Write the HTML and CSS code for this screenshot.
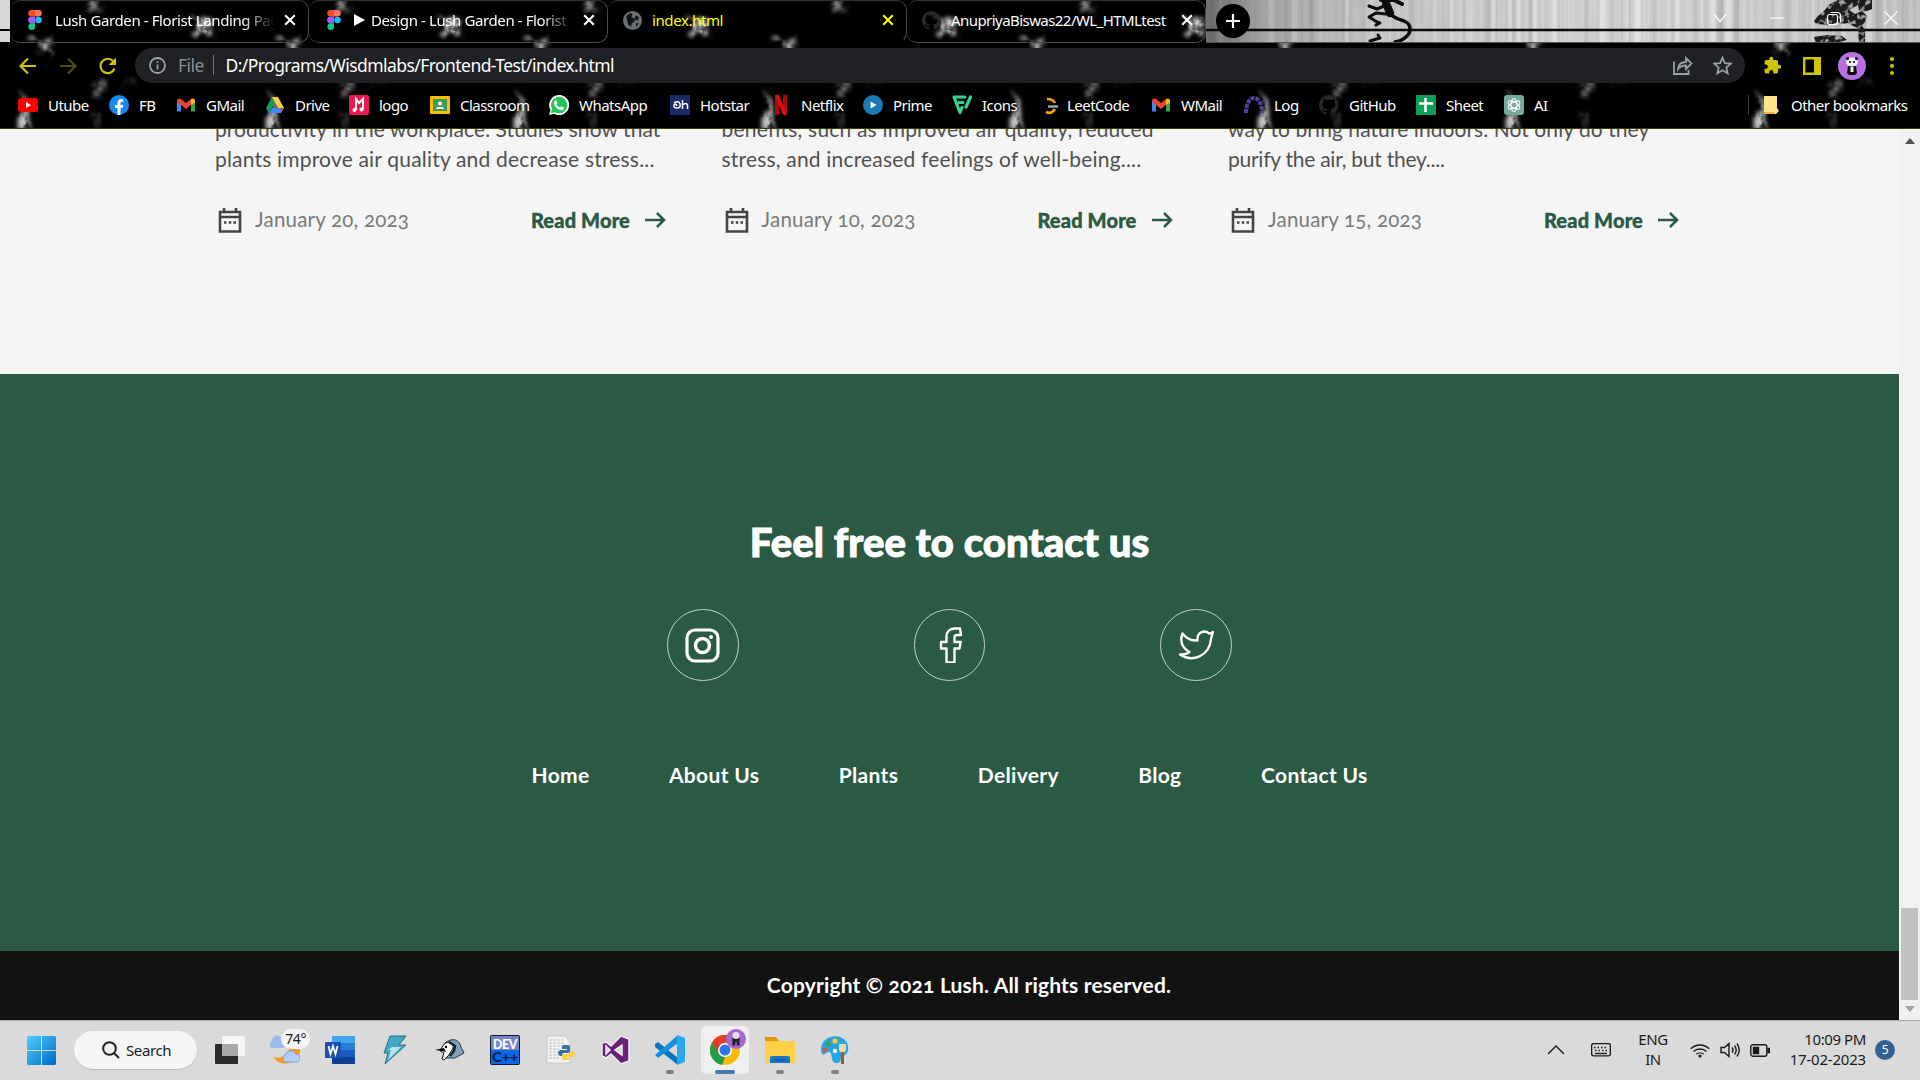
FILE: index.html
```html
<!DOCTYPE html>
<html lang="en">
<head>
<meta charset="utf-8">
<title>index.html</title>
<link rel="stylesheet" href="styles.css">
</head>
<body>
<div class="screen">
<header class="browser">
  <svg class="backdrop" width="1920" height="129" aria-hidden="true">
    <defs>
      <filter id="smoke" x="-80%" y="-80%" width="260%" height="260%">
        <feTurbulence type="fractalNoise" baseFrequency="0.08" numOctaves="5" seed="4" result="n"/>
        <feDisplacementMap in="SourceGraphic" in2="n" scale="22" xChannelSelector="R" yChannelSelector="G" result="d"/>
        <feGaussianBlur in="d" stdDeviation="2" result="b"/>
        <feColorMatrix in="n" type="matrix" values="0 0 0 0 1  0 0 0 0 1  0 0 0 0 1  3 0 0 0 -.75" result="m"/>
        <feComposite in="b" in2="m" operator="in"/>
      </filter>
      <pattern id="marble" width="248" height="129" patternUnits="userSpaceOnUse">
        <rect width="248" height="129" fill="#000"/>
        <g filter="url(#smoke)" fill="#d8d8d8">
          <path d="M190 19l14 0 9 6 0 12-8-2-9-6z"/>
          <path d="M28 40l24-3 8 4-12 5 2 12-6-2-6-9z"/>
          <path d="M88 80l22-2-4 12-8 6z" opacity=".5"/>
          <path d="M22 90l9 8 0 32h-9z" opacity=".9"/>
          <path d="M92 108l8 6-2 12-4-4z" opacity=".5"/>
          <path d="M88 2l14 2-2 8-8-3z" opacity=".6"/>
          <path d="M122 82l14-2-2 6z" opacity=".25"/>
        </g>
      </pattern>
      <linearGradient id="steel" x1="0" x2="1" y1="0" y2="0">
        <stop offset="0" stop-color="#777"/><stop offset=".09" stop-color="#b5b5b5"/><stop offset=".25" stop-color="#d6d6d6"/><stop offset=".6" stop-color="#e4e4e4"/><stop offset="1" stop-color="#cfcfcf"/>
      </linearGradient>
      <filter id="brushed" x="0" y="0" width="100%" height="100%">
        <feTurbulence type="fractalNoise" baseFrequency="0.12 0.001" numOctaves="3" seed="9"/>
        <feColorMatrix type="matrix" values="0 0 0 0 0  0 0 0 0 0  0 0 0 0 0  .4 0 0 0 -.12"/>
      </filter>
      <filter id="mottle" x="0" y="0" width="100%" height="100%">
        <feTurbulence type="fractalNoise" baseFrequency="0.2" numOctaves="2" seed="3" result="n"/>
        <feColorMatrix in="n" type="matrix" values="0 0 0 0 .4  0 0 0 0 .4  0 0 0 0 .4  4 0 0 0 -2.100" result="m"/>
        <feComposite in="m" in2="SourceGraphic" operator="in" result="t"/>
        <feMerge><feMergeNode in="SourceGraphic"/><feMergeNode in="t"/></feMerge>
      </filter>
    </defs>
    <rect width="1920" height="129" fill="url(#marble)"/>
    <rect width="10" height="42" fill="#d8d8d8"/><rect y="29" width="10" height="2"/>
    <rect x="1206" width="714" height="42" fill="url(#steel)"/>
    <rect x="1206" width="714" height="42" filter="url(#brushed)"/>
    <path d="M1206 30h714" stroke="#0a0a0a" stroke-width="2.4"/>
    <g fill="none" stroke="#0c0c0c" stroke-linecap="round" stroke-linejoin="round">
      <path d="M1386 3l4 10" stroke-width="8"/>
      <path d="M1381 0h13l8 4" stroke-width="4"/>
      <path d="M1384 6l-7 3-8-3" stroke-width="3"/>
      <path d="M1386 14l-10-1-7 4 8 5 3 1-4 2" stroke-width="3"/>
      <path d="M1391 14c5 7 15 5 18 11q3 6-2 11t-12 6" stroke-width="3.500"/>
      <path d="M1370 41l10-3-2-3" stroke-width="3"/>
    </g>
    <g filter="url(#mottle)" fill="#1a1a1a">
      <path d="M1823 12l7-8 8-4h34l0 9-5 2-8-1-1-5-9 5 6 4 7-3 5 5-2 6-3 3 3 6v12h-6l-1-15-5-2-5-3-6 1-4-2-8 3-14-1-2-3 4-5z"/>
      <path d="M1814 37l12-2 16 1 5 4-12 3h-19z"/>
    </g>
    <path d="M1206 42.500H1920" stroke="#555"/>
    <path d="M0 128.500h1920" stroke="#3b3b08"/>
  </svg>
  <nav class="tabs">
    <div class="tab"><svg class="tab-icon" viewBox="0 0 14 20"><path fill="#f24e1e" d="M7 0H3.500a3.300 3.300 0 000 6.600H7z"/><path fill="#ff7262" d="M7 0h3.500a3.300 3.300 0 010 6.600H7z"/><path fill="#a259ff" d="M7 6.600H3.500a3.300 3.300 0 000 6.700H7z"/><circle cx="10.500" cy="10" r="3.300" fill="#1abcfe"/><path fill="#0acf83" d="M7 13.300H3.500A3.300 3.300 0 107 16.700z"/></svg><span class="tab-title fade">Lush Garden - Florist Landing Pag</span><svg class="close" viewBox="0 0 10 10"><path d="M1 1l8 8M9 1l-8 8"/></svg></div>
    <div class="tab"><svg class="tab-icon" viewBox="0 0 14 20"><path fill="#f24e1e" d="M7 0H3.500a3.300 3.300 0 000 6.600H7z"/><path fill="#ff7262" d="M7 0h3.500a3.300 3.300 0 010 6.600H7z"/><path fill="#a259ff" d="M7 6.600H3.500a3.300 3.300 0 000 6.700H7z"/><circle cx="10.500" cy="10" r="3.300" fill="#1abcfe"/><path fill="#0acf83" d="M7 13.300H3.500A3.300 3.300 0 107 16.700z"/></svg><span class="tab-title fade"><svg class="play" viewBox="0 0 11 12"><path d="M0 0l11 6-11 6z" fill="#fff"/></svg>Design - Lush Garden - Florist</span><svg class="close" viewBox="0 0 10 10"><path d="M1 1l8 8M9 1l-8 8"/></svg></div>
    <div class="tab active"><svg class="tab-icon wide" viewBox="0 0 18 18"><circle cx="9" cy="9" r="9" fill="#6a6f74"/><path fill="#111" d="M3 5l4-3 2 1-1 3 3 1v3l-3 2v3l-3-2-1-4zM12 4l3 2-1 3-3-1zM12 12l3-1-2 4z"/></svg><span class="tab-title">index.html</span><svg class="close" viewBox="0 0 10 10"><path d="M1 1l8 8M9 1l-8 8"/></svg></div>
    <div class="tab"><svg class="tab-icon wide" viewBox="0 0 16 16"><path fill="#24292f" d="M8 0a8 8 0 00-2.500 15.600c.4.1.5-.2.5-.4v-1.500C3.800 14.200 3.300 12.700 3.300 12.700c-.4-.9-.9-1.200-.9-1.200-.7-.5.1-.5.1-.5.8.1 1.200.8 1.200.8.700 1.200 1.900.9 2.300.7.100-.5.300-.9.500-1.100-1.800-.2-3.600-.9-3.600-4 0-.9.300-1.600.8-2.100-.1-.2-.4-1 .1-2.100 0 0 .7-.2 2.200.8a7.500 7.500 0 014 0c1.500-1 2.200-.8 2.200-.8.4 1.100.2 1.900.1 2.100.5.5.8 1.200.8 2.100 0 3.100-1.900 3.700-3.700 3.900.3.300.6.800.6 1.500v2.200c0 .2.100.5.600.4A8 8 0 008 0z"/></svg><span class="tab-title narrow">AnupriyaBiswas22/WL_HTMLtest</span><svg class="close" viewBox="0 0 10 10"><path d="M1 1l8 8M9 1l-8 8"/></svg></div>
    <div class="new-tab"><svg width="16" height="16"><path d="M8 1v14M1 8h14" stroke="#fff" stroke-width="2.200"/></svg></div>
    <div class="window-controls">
      <svg width="14" height="10"><path d="M1 1.500l6 7 6-7"/></svg>
      <svg width="14" height="10"><path d="M0 5h14"/></svg>
      <svg width="14" height="14"><rect x=".5" y="3.500" width="10" height="10" rx="2"/><path d="M3.500 1.500h7a3 3 0 013 3v7"/></svg>
      <svg width="14" height="14"><path d="M.5.5l13 13M13.500.5l-13 13"/></svg>
    </div>
  </nav>
  <div class="toolbar">
    <div class="nav-buttons">
      <svg width="18" height="18" viewBox="0 0 18 18"><path d="M17 9H2M9 1.500L1.500 9 9 16.500"/></svg>
      <svg class="dim" width="18" height="18" viewBox="0 0 18 18"><path d="M1 9h15M9 1.500L16.500 9 9 16.500"/></svg>
      <svg width="20" height="18" viewBox="0 0 20 18"><path d="M15.500 11.500A7.200 7.200 0 1114 4l2 2.500"/><path d="M17 .5V8H9.500z" fill="#cdc500" stroke="none"/></svg>
    </div>
    <div class="omnibox">
      <svg class="info" width="17" height="17" viewBox="0 0 17 17"><circle cx="8.500" cy="8.500" r="7.500"/><path d="M8.500 7.500v5M8.500 4.200v1.800"/></svg>
      <span class="scheme">File</span><span class="bar"></span><span class="url">D:/Programs/Wisdmlabs/Frontend-Test/index.html</span>
      <svg class="share" width="20" height="20" viewBox="0 0 20 20"><path d="M1 5.500v12.500h14.500v-4M5 13c.5-5 3.500-7 8-7V2l5.500 5.500L13 13V9.500c-4 0-6 1-8 3.500z"/></svg>
      <svg class="star" width="19" height="19" viewBox="0 0 24 24"><path d="M12 2l3 7 7.500.6-5.700 5 1.800 7.400-6.600-4-6.600 4 1.800-7.400-5.700-5L9 9z"/></svg>
    </div>
    <div class="extensions">
      <svg width="19" height="19" viewBox="0 0 24 24"><path fill="#cdc500" d="M20.500 11H19V7a2 2 0 00-2-2h-4V3.500a2.500 2.500 0 00-5 0V5H4a2 2 0 00-2 2v3.800h1.500a2.700 2.700 0 010 5.400H2V20a2 2 0 002 2h3.800v-1.500a2.700 2.700 0 015.400 0V22H17a2 2 0 002-2v-4h1.500a2.500 2.500 0 000-5z"/></svg>
      <svg width="18" height="18"><path d="M1.200 1.200h15.600v15.600H1.200z" fill="none" stroke="#cdc500" stroke-width="2.400"/><path fill="#cdc500" d="M11 1h6v16h-6z"/></svg>
      <svg width="28" height="28" viewBox="0 0 28 28"><circle cx="14" cy="14" r="14" fill="#b96fe0"/><path fill="#111" d="M10 14h8l1 7-2 2h-6l-2-2z"/><ellipse cx="14" cy="10" rx="6" ry="4.500" fill="#eee"/><path fill="#eee" d="M12.500 15h3v5h-3z"/><circle cx="9.500" cy="6.500" r="1.500"/><circle cx="18.500" cy="6.500" r="1.500"/><circle cx="12" cy="10" r="1"/><circle cx="16" cy="10" r="1"/></svg>
      <svg width="4" height="18"><g fill="#cdc500"><circle cx="2" cy="2" r="2"/><circle cx="2" cy="9" r="2"/><circle cx="2" cy="16" r="2"/></g></svg>
    </div>
  </div>
  <div class="bookmarks">
    <a><svg viewBox="0 0 20 20"><rect y="3" width="20" height="14" rx="3.500" fill="#f00"/><path d="M8 7l5 3-5 3z" fill="#fff"/></svg>Utube</a>
    <a><svg viewBox="0 0 20 20"><circle cx="10" cy="10" r="10" fill="#1689f0"/><path fill="#fff" d="M8.500 20v-7H6v-3h2.500V8c0-2.600 1.500-4 3.800-4l2 .2v2.500h-1.200c-1.200 0-1.600.7-1.600 1.500V10h2.700l-.5 3h-2.200v7z"/></svg>FB</a>
    <a><svg viewBox="0 0 20 20"><path fill="#4285f4" d="M1 5.500v11h4V9z"/><path fill="#34a853" d="M19 5.500v11h-4V9z"/><path fill="#ea4335" d="M1 6c0-3 3-3 4-2l5 4 5-4 1 5-6 5-5-4-4-3z"/><path fill="#fbbc04" d="M15 4c2-1.500 4 0 4 2v1.500L15 10z"/></svg>GMail</a>
    <a><svg viewBox="0 0 20 20"><path fill="#0f9d58" d="M7 2L1 13l3 5 6-10.500z"/><path fill="#ffcd40" d="M7 2h6l6 11h-6z"/><path fill="#4285f4" d="M4 18l3-5h12l-3 5z"/><path fill="#ea4335" d="M15 13h4l-2 3z"/></svg>Drive</a>
    <a><svg viewBox="0 0 20 20"><rect width="20" height="20" rx="2" fill="#ed174f"/><path d="M7 15V4l3 4 4-4v10" fill="none" stroke="#fff" stroke-width="2"/><circle cx="5.500" cy="15" r="2" fill="#fff"/><circle cx="12.500" cy="14.500" r="2" fill="#fff"/></svg>logo</a>
    <a><svg viewBox="0 0 20 20"><rect y="1" width="20" height="18" rx="1" fill="#fbbc04"/><rect x="3" y="4" width="14" height="12" fill="#3f9a54"/><circle cx="10" cy="8.500" r="2" fill="#fff"/><path d="M6 14c0-3 8-3 8 0z" fill="#fff"/></svg>Classroom</a>
    <a><svg viewBox="0 0 20 20"><path fill="#fff" d="M0 20l1.500-5A10 10 0 1110 20c-2 0-3.500-.5-5-1.300z"/><path fill="#25c558" d="M2 18l1-4a8.200 8.200 0 117 4.200c-1.500 0-3-.4-4-1z"/><path fill="#fff" d="M7 5l1.500 3-1 1.200c.8 1.500 1.800 2.500 3.500 3.300l1.200-1.200 2.800 1.500c0 2-2 2.700-3.500 2.200C8 14 5.500 11.500 5 8.500 5 7 5.800 5 7 5z"/></svg>WhatsApp</a>
    <a><svg viewBox="0 0 20 20"><path fill="#1b2a66" d="M0 0h20v20H0z"/><path d="M4 8q5-3 6 1t-3 4q-4 0-3-3 2-2 3 1M12.500 5v9M12.500 10q4-3 5 0v4" fill="none" stroke="#fff" stroke-width="1.500"/></svg>Hotstar</a>
    <a><svg viewBox="0 0 20 20"><path fill="#b1060f" d="M4 0h4v20H4zM12 0h4v20h-4z"/><path fill="#e50914" d="M4 0h4l8 20h-4z"/></svg>Netflix</a>
    <a><svg viewBox="0 0 20 20"><circle cx="10" cy="10" r="10" fill="#1b79b8"/><path fill="#fff" d="M7.500 6.500l6 3.500-6 3.500z"/></svg>Prime</a>
    <a><svg viewBox="0 0 20 20"><path d="M13 2H2l6 15.500 2-5M7 7.500h4M18.500 2L14 12" fill="none" stroke="#35d18f" stroke-width="3.200" stroke-linejoin="round" stroke-linecap="round"/></svg>Icons</a>
    <a class="leet"><svg viewBox="0 0 20 20"><path d="M5 4c5 0 7 2 8 4M4 17c4 2 7 0 9-3" fill="none" stroke="#ffa116" stroke-width="2.600"/><path d="M6 11.500h10" stroke="#b3b3b3" stroke-width="2.200"/></svg>LeetCode</a>
    <a><svg viewBox="0 0 20 20"><path fill="#4285f4" d="M1 5.500v11h4V9z"/><path fill="#34a853" d="M19 5.500v11h-4V9z"/><path fill="#ea4335" d="M1 6c0-3 3-3 4-2l5 4 5-4 1 5-6 5-5-4-4-3z"/><path fill="#fbbc04" d="M15 4c2-1.500 4 0 4 2v1.500L15 10z"/></svg>WMail</a>
    <a><svg viewBox="0 0 20 20"><path d="M2 18C2 -2 18 -2 18 18" fill="none" stroke="#51449a" stroke-width="4" stroke-dasharray="4 1"/></svg>Log</a>
    <a><svg viewBox="0 0 16 16"><path fill="#24292f" d="M8 0a8 8 0 00-2.500 15.600c.4.1.5-.2.5-.4v-1.500C3.800 14.200 3.300 12.700 3.300 12.700c-.4-.9-.9-1.200-.9-1.200-.7-.5.1-.5.1-.5.8.1 1.200.8 1.200.8.700 1.200 1.900.9 2.300.7.100-.5.300-.9.500-1.100-1.800-.2-3.600-.9-3.600-4 0-.9.300-1.600.8-2.100-.1-.2-.4-1 .1-2.100 0 0 .7-.2 2.200.8a7.500 7.500 0 014 0c1.500-1 2.200-.8 2.200-.8.4 1.100.2 1.900.1 2.100.5.5.8 1.200.8 2.100 0 3.100-1.900 3.700-3.700 3.900.3.300.6.800.6 1.500v2.200c0 .2.100.5.600.4A8 8 0 008 0z"/></svg>GitHub</a>
    <a><svg viewBox="0 0 20 20"><rect width="20" height="20" rx="1" fill="#0f9d58"/><path d="M9.500 3v14M3 8.500h14" stroke="#fff" stroke-width="2.600"/></svg>Sheet</a>
    <a><svg viewBox="0 0 20 20"><rect width="20" height="20" rx="3" fill="#75a99b"/><g fill="none" stroke="#fff" stroke-width="1.100"><ellipse cx="10" cy="10" rx="3" ry="6.500"/><ellipse cx="10" cy="10" rx="3" ry="6.500" transform="rotate(60 10 10)"/><ellipse cx="10" cy="10" rx="3" ry="6.500" transform="rotate(120 10 10)"/></g></svg>AI</a>
    <a class="other"><svg viewBox="0 0 20 20"><path fill="#ffe28a" d="M3 1h13v12l2 3-3 3H3z"/><path fill="#e9b93c" d="M3 17h11v2H3z"/></svg><span>Other bookmarks</span></a>
  </div>
</header>
<div class="viewport">
  <main class="page">
    <section class="posts">
      <article class="post"><p>productivity in the workplace. Studies show that<br><span class="wider">plants improve air quality and decrease stress...</span></p>
        <footer><svg class="cal" width="24" height="27" viewBox="0 0 24 27"><path d="M2 5h20v19.500H2zM2 10h20M6 1v4M18 1v4"/><path d="M6 15.500h2.500M10.800 15.500h2.500M15.500 15.500h2.500"/></svg><time>January 20, 2023</time><a class="more">Read More<svg width="21" height="16" viewBox="0 0 21 16"><path d="M0 8h19M12 1l7 7-7 7"/></svg></a></footer></article>
      <article class="post"><p class="wider">benefits, such as improved air quality, reduced<br>stress, and increased feelings of well-being....</p>
        <footer><svg class="cal" width="24" height="27" viewBox="0 0 24 27"><path d="M2 5h20v19.500H2zM2 10h20M6 1v4M18 1v4"/><path d="M6 15.500h2.500M10.800 15.500h2.500M15.500 15.500h2.500"/></svg><time>January 10, 2023</time><a class="more">Read More<svg width="21" height="16" viewBox="0 0 21 16"><path d="M0 8h19M12 1l7 7-7 7"/></svg></a></footer></article>
      <article class="post"><p>way to bring nature indoors. Not only do they<br><span class="short">purify the air, but they....</span></p>
        <footer><svg class="cal" width="24" height="27" viewBox="0 0 24 27"><path d="M2 5h20v19.500H2zM2 10h20M6 1v4M18 1v4"/><path d="M6 15.500h2.500M10.800 15.500h2.500M15.500 15.500h2.500"/></svg><time>January 15, 2023</time><a class="more">Read More<svg width="21" height="16" viewBox="0 0 21 16"><path d="M0 8h19M12 1l7 7-7 7"/></svg></a></footer></article>
    </section>
    <section class="contact">
      <h2>Feel free to contact us</h2>
      <div class="social">
        <a><svg width="36" height="36" viewBox="0 0 36 36"><rect x="2" y="3" width="31" height="31" rx="8" stroke-width="3.200"/><circle cx="17.500" cy="18.500" r="7" stroke-width="3.500"/><circle cx="26" cy="10" r="1" stroke-width="2"/></svg></a>
        <a><svg width="36" height="36" viewBox="0 0 36 36"><path stroke-width="2.400" d="M28 1.500h-5c-5 0-8.500 3-8.500 8v5.500H9v6.500h5.500V35.500h8V21.500h5l1.200-6.500h-6.200V10.500c0-1.500.5-2.500 2.500-2.500h4z"/></svg></a>
        <a><svg width="36" height="36" viewBox="0 0 36 36"><path stroke-width="2.400" d="M35 5c-1.300 1-2.600 1.500-4 1.500-4-4-11.500-1.500-11.500 5v2C13 14 8.500 11.500 4.500 6.500c-2.500 7-1 14 7 18.500-2.500 2-6 2.800-9.500 2.500 12 8 29.500 2.500 31.200-16.500z"/></svg></a>
      </div>
      <nav class="links"><a>Home</a><a>About Us</a><a>Plants</a><a>Delivery</a><a>Blog</a><a>Contact Us</a></nav>
    </section>
    <footer class="copyright">Copyright © 2021 Lush. All rights reserved.</footer>
  </main>
  <div class="scrollbar"><svg width="10" height="6"><path d="M0 6l5-6 5 6z" fill="#505050"/></svg><i class="thumb"></i><svg width="10" height="6"><path d="M0 0l5 6 5-6z" fill="#a3a3a3"/></svg></div>
</div>
<footer class="taskbar">
  <svg class="start" viewBox="0 0 29 29"><defs><linearGradient id="win" x2="1" y2="1"><stop stop-color="#4fd1ff"/><stop offset="1" stop-color="#0067c8"/></linearGradient></defs><path fill="url(#win)" d="M1 0h13v14H0V1zM15 0h13l1 1v13H15zM0 15h14v14H1l-1-1zM15 15h14v13l-1 1H15z"/></svg>
  <div class="search"><svg width="18" height="18"><circle cx="7.500" cy="7.500" r="6.300"/><path d="M12 12l5 5"/></svg><span>Search</span></div>
  <div class="apps">
    <span class="app"><svg viewBox="0 0 30 30"><rect y="9" width="23" height="20" rx="1" fill="#2b2b2b"/><rect x="7" y="1" width="23" height="20" rx="1" fill="#f6f6f6"/><path fill="#a9a9a9" d="M7 9h16v12H7z"/></svg></span>
    <span class="app weather"><svg viewBox="0 0 30 30"><path fill="#f59a1c" d="M28 8a14 13 0 11-25 14c9 3 18-4 17-15z"/><path fill="#9cbcf0" d="M1 13a4 4 0 011-7 5 5 0 0110-1c5 0 5 8 1 8z"/><path fill="#b3cdf8" stroke="#7da0de" d="M15 27a4 4 0 010-7 6 6 0 0111-1c5 0 5 8 1 8z"/></svg><b>74°</b></span>
    <span class="app"><svg viewBox="0 0 30 30"><rect x="7" y="1" width="23" height="28" rx="2" fill="#185abd"/><path fill="#41a5ee" d="M7 1h23v7H7z"/><path fill="#2b7cd3" d="M7 8h23v7H7z"/><path fill="#103f91" d="M7 22h23v7H7z"/><rect y="7" width="16" height="16" rx="1" fill="#1a51b4"/><path d="M3.500 11l2 8 2.500-8 2.500 8 2-8" fill="none" stroke="#fff" stroke-width="1.800"/></svg></span>
    <span class="app"><svg viewBox="0 0 30 30"><path fill="#43a6c3" stroke="#27718c" d="M10 1h16l-7 9h7L5 29l3-11H4z"/><path fill="#b9e5ef" d="M12 12h9L8 25l3-10H8z"/></svg></span>
    <span class="app"><svg viewBox="0 0 30 30"><path fill="#7ba2c0" stroke="#333" d="M10 8c6-5 14-5 16 4l3 6-9 5H8z"/><path fill="#fff" stroke="#222" d="M9 9c5-4 12 0 8 6l-4 6-4 4-2-1 2-6-4-2z"/><path d="M0 15l9-2 2 4-4-1z"/><path d="M14 7l6 4-1 5-4 5" stroke="#222" stroke-width="2.500" fill="none"/><circle cx="11" cy="12" r="1.200"/></svg></span>
    <span class="app"><svg viewBox="0 0 30 30"><rect width="30" height="30" rx="2" fill="#101530"/><path fill="#7486c7" d="M1 1h28v14H1z"/><path fill="#0868e0" d="M1 15h28v14H1z"/><text class="dev" x="3" y="14" textLength="24" lengthAdjust="spacingAndGlyphs">DEV</text><text class="cpp" x="2" y="27" textLength="26" lengthAdjust="spacingAndGlyphs">C++</text></svg></span>
    <span class="app"><svg viewBox="0 0 30 30"><path fill="#f3f3f3" stroke="#c9c9c9" d="M2 1h18l5 6v21H2z"/><path d="M4 5h14M4 8h16M4 11h17M4 14h10M4 17h9M4 20h9M4 23h10" stroke="#bbb" stroke-dasharray="3 1"/><path fill="#3571a3" d="M19 10h4q2 0 2 2v4q0 2-2 2h-4q-2 0-2 3h-2q-2-1-2-3t2-3h7v-1h-5v-2q0-2 2-2z"/><path fill="#ffd13b" d="M23 25h-4q-2 0-2-2v-3q0-1 2-1h4q3 0 3-3h2q2 1 2 3t-2 3h-6v1h3q0 2-2 2z"/></svg></span>
    <span class="app"><svg viewBox="0 0 30 30"><path fill="#68217a" stroke="#f4edf6" stroke-width="1.500" fill-rule="evenodd" d="M21 1l8 3v22l-8 3-10-10-5 4-4-2V8l4-1 5 4zM22 10l-7 5 7 5zM6 11v8l4-4z"/></svg></span>
    <span class="app run"><svg viewBox="0 0 30 30"><path fill="#0a74bf" d="M0 9l3-2 20 16v7L0 12z"/><path fill="#168fdc" d="M0 20l3 3L23 8V0z"/><path fill="#2ba8f2" d="M22 0l8 3v24l-8 3z"/></svg></span>
    <span class="app current"><svg viewBox="0 0 30 30"><circle cx="15" cy="15" r="15" fill="#fbbc05"/><path fill="#e33b2e" d="M2 7.500A15 15 0 0128 7.500H15L8.500 19z"/><path fill="#249b48" d="M2 7.500L9 19l6 3.500L12 30A15 15 0 012 7.500z"/><circle cx="15" cy="15" r="7" fill="#fff"/><circle cx="15" cy="15" r="5.500" fill="#2f76e8"/></svg><svg class="badge" viewBox="0 0 28 28"><circle cx="14" cy="14" r="14" fill="#a866d0"/><path fill="#222" d="M9 12h10v11h-4v-5h-2v5H9z"/><circle cx="14" cy="9" r="5" fill="#ddd"/></svg></span>
    <span class="app run"><svg viewBox="0 0 30 30"><path fill="#df9a09" d="M0 2h11l3 4v5H0z"/><path fill="#ffcf48" d="M0 6h30v22H0z"/><path fill="#1976c8" d="M5 28v-5q0-2 2-2h16q2 0 2 2v5z"/><path d="M9 25h12" stroke="#0a4c8c"/></svg></span>
    <span class="app run"><svg viewBox="0 0 30 30"><path fill="#28a4e2" d="M1 16C0 5 11-1 20 2c11 4 10 17 3 19-4 1 0 7-6 7-8 0-3-10-8-11-3-1-6 7-8-1z"/><circle cx="8" cy="9" r="2.600" fill="#37a444"/><circle cx="15" cy="6" r="2.600" fill="#ffc928"/><circle cx="5" cy="15" r="2.300" fill="#e55333"/><circle cx="15" cy="16" r="2.200" fill="#e6f5fc"/><path fill="#f0d7a8" d="M19 9h7v6l-2 3h-3l-2-3z"/><path fill="#a45b20" d="M21 17h3v12h-3z"/></svg></span>
  </div>
  <div class="tray">
    <svg class="up" width="16" height="10"><path d="M0 9l8-8 8 8"/></svg>
    <svg class="kbd" width="20" height="14"><rect x=".6" y=".6" width="18.800" height="12.300" rx="2"/><path d="M3 4.500h14M4 7.500h12" stroke-dasharray="1.500 2"/><path d="M4 10.500h12"/></svg>
    <div class="lang">ENG<br>IN</div>
    <svg class="wifi" width="20" height="15"><path d="M.8 5.800a13 13 0 0118.400 0M3.600 8.600a9 9 0 0112.800 0M6.400 11.300a5.200 5.200 0 017.200 0"/><circle cx="10" cy="13" r="1.600" fill="#1a1a1a" stroke="none"/></svg>
    <svg class="vol" width="20" height="16"><path d="M1 5.500h3.500L9 1.500v13L4.500 10.500H1zM12 5.500q2 2.500 0 5M14.500 3.500q3.500 4.500 0 9M17 1.500q4.500 6.500 0 13"/></svg>
    <svg class="bat" width="20" height="13"><rect x=".8" y=".8" width="16" height="11.400" rx="2"/><path fill="#1a1a1a" d="M3.500 3.500h5v6h-5zM18 4.500h1.500v4H18z"/></svg>
    <div class="clock">10:09 PM<br><span>17-02-2023</span></div>
    <span class="count">5</span>
  </div>
</footer>
</div>
</body>
</html>
```
FILE: styles.css
```css
* { box-sizing: border-box; }
body { margin: 0; font-family: "Noto Sans", "Open Sans", sans-serif; }
.screen { width: 1920px; height: 1080px; overflow: hidden; display: flex; flex-direction: column; }

/* Browser chrome */
.browser { position: relative; height: 129px; flex: none; color: #fff; font-size: 15px; }
.backdrop { position: absolute; left: 0; top: 0; }
.tabs, .toolbar, .bookmarks { position: relative; display: flex; align-items: center; }
.tabs { height: 43px; padding-left: 10px; align-items: flex-start; }
.tab { width: 299px; height: 43px; display: flex; align-items: center; padding: 0 12px 3px 18px; border: 1px solid #4a4a4a; border-top-color: #333; border-left: 0; border-radius: 10px; }
.tab.active { border-bottom-color: transparent; color: #ff0; }
.tab-icon { width: 14px; height: 20px; flex: none; margin-right: 13px; }
.tab-icon.wide { width: 19px; height: 19px; margin: 0 10px 0 -3px; }
.tab-title { flex: 1; white-space: nowrap; overflow: hidden; margin-right: 9px; letter-spacing: -.4px; }
.tab-title.narrow { letter-spacing: -.56px; }
.fade { -webkit-mask: linear-gradient(90deg, #000 85%, transparent); mask: linear-gradient(90deg, #000 85%, transparent); }
.play { width: 11px; height: 12px; margin-right: 6px; }
.close { width: 12px; height: 12px; flex: none; fill: none; stroke: currentColor; stroke-width: 1.8; }
.new-tab { width: 34px; height: 34px; border-radius: 50%; background: #000; margin: 4px 0 0 10px; display: grid; place-items: center; }
.window-controls { margin: 11px 22px 0 auto; display: flex; gap: 43px; align-items: center; fill: none; stroke: #fff; stroke-width: 1.2; }
.toolbar { height: 45px; padding: 0 26px 0 19px; }
.nav-buttons { display: flex; gap: 22px; width: 116px; fill: none; stroke: #cdc500; stroke-width: 2.2; }
.dim { opacity: .4; }
.omnibox { width: 1610px; height: 35px; border-radius: 18px; background: #202124; display: flex; align-items: center; padding: 0 13px 0 14px; font-size: 17.5px; }
.omnibox svg { fill: none; stroke: #9aa0a6; stroke-width: 1.8; }
.omnibox span { position: relative; top: -1px; }
.scheme { margin-left: 12px; color: #8c9094; letter-spacing: -.5px; }
.url { letter-spacing: -.56px; }
.bar { width: 1.5px; height: 20px; background: #777; margin: 0 11px 0 9px; }
.share { margin-left: auto; }
.omnibox .star { margin-left: 20px; stroke-width: 2.2; }
.extensions { margin-left: auto; width: 131px; display: flex; align-items: center; justify-content: space-between; }
.extensions svg:nth-child(3) { margin: 0 3px 0 -3px; }
.bookmarks { height: 34px; padding-left: 18px; display: grid; grid-template-columns: 91px 67px 89px 84px 81px 119px 121px 101px 92px 89px 90px 109px 93px 75px 97px 88px 244px auto; letter-spacing: -.52px; }
.bookmarks a { display: flex; align-items: center; gap: 10px; white-space: nowrap; }
.bookmarks a svg { width: 20px; height: 20px; flex: none; }
.bookmarks .leet { gap: 5px; }
.bookmarks .other { border-left: 1px solid #444; padding-left: 12px; height: 20px; justify-self: start; }

/* Web page */
.viewport { height: 891px; display: flex; }
.page { width: 1899px; font-family: Lato, "Noto Sans", sans-serif; font-size: 20px; font-variant-numeric: oldstyle-nums; }
.posts { height: 245px; overflow: hidden; background: #f5f5f5; padding: 0 0 0 215px; display: grid; grid-template-columns: repeat(3, 451px); column-gap: 55.5px; align-content: start; }
.post p { margin: -15px 0 0; font-size: 21px; line-height: 30px; white-space: nowrap; color: #505050; letter-spacing: .07px; }
.post .wider { letter-spacing: .19px; }
.post .short { letter-spacing: -.25px; }
.post footer { height: 30px; margin-top: 31px; padding-left: 3px; display: flex; align-items: center; color: #7a7a7a; }
.post time { font-size: 20.5px; letter-spacing: .22px; margin-top: -2px; }
.cal { fill: none; stroke: #444; stroke-width: 2.6; margin-right: 13px; }
.more { margin-left: auto; font-weight: 900; letter-spacing: .15px; -webkit-text-stroke: .4px #2a5a44; color: #2a5a44; display: flex; align-items: center; gap: 15px; }
.more svg { fill: none; stroke: #2a5a44; stroke-width: 2.5; }
.contact { height: 577px; background: #2a5a44; color: #fff; display: flex; flex-direction: column; align-items: center; padding-top: 144px; }
.contact h2 { margin: 0; font-size: 40px; line-height: 48px; font-weight: 900; letter-spacing: .12px; -webkit-text-stroke: 1px #fff; }
.social { display: flex; gap: 175px; margin-top: 43px; }
.social a { width: 71.5px; height: 71.5px; border: 1.5px solid #c4d1ca; border-radius: 50%; display: grid; place-items: center; }
.social svg { fill: none; stroke: #fff; stroke-linejoin: round; }
.links { display: flex; gap: 79.5px; margin-top: 81px; font-size: 21px; line-height: 26px; font-weight: 700; letter-spacing: .32px; }
.copyright { height: 69px; background: #121212; color: #fff; font-size: 21px; font-weight: 700; letter-spacing: .17px; display: flex; align-items: center; justify-content: center; padding: 0 0 2px 39px; }
.scrollbar { width: 21px; background: #f1f1f1; display: flex; flex-direction: column; align-items: center; padding: 9px 0 8px; }
.thumb { width: 17px; height: 92px; background: #c1c1c1; margin: auto 0 6px; }

/* Taskbar */
.taskbar { height: 60px; background: #dadada; border-top: 1px solid #aaa; display: flex; align-items: center; color: #1a1a1a; font-size: 15px; letter-spacing: -.4px; padding: 0 0 1px 27px; }
.start { width: 29px; height: 29px; }
.search { margin-left: 18px; width: 123px; height: 38px; border-radius: 19px; background: #f5f5f5; box-shadow: 0 1px 1px #bbb; display: flex; align-items: center; padding: 0 0 1px 28px; gap: 6px; }
.search svg { fill: none; stroke: #222; stroke-width: 2; }
.apps { display: flex; margin-left: 9px; }
.app { width: 48px; height: 48px; margin-right: 7px; display: grid; place-items: center; position: relative; border-radius: 5px; }
.app > svg { width: 30px; height: 30px; }
.weather b { position: absolute; right: -1px; top: 3px; background: #f6f6f6; border-radius: 11px; font-weight: 400; font-size: 14px; line-height: 20px; padding: 0 4px; }
.run::after, .current::after { content: ""; position: absolute; bottom: 0; left: 20px; width: 8px; height: 4px; border-radius: 2px; background: #808080; }
.current { background: #efefef; }
.current::after { width: 20px; left: 14px; background: #4379ac; }
.app > .badge { position: absolute; width: 20px; height: 20px; right: 3px; top: 3px; }
.dev { font: 900 13px Lato, sans-serif; fill: #fff; }
.cpp { font: 900 13px Lato, sans-serif; fill: #0b1c55; }
.tray { margin-left: auto; display: flex; align-items: center; padding-right: 25px; }
.tray svg { fill: none; stroke: #1a1a1a; stroke-width: 1.4; }
.lang { width: 40px; text-align: center; line-height: 20px; margin: -2px 17px 0 22px; }
.up { margin-right: 27px; }
.wifi, .vol { margin-right: 10px; }
.clock { text-align: right; line-height: 20px; width: 96px; margin: -2px 9px 0 0; }
.clock span { letter-spacing: -.2px; }
.count { width: 20px; height: 20px; border-radius: 50%; background: #345f91; color: #fff; font-size: 12px; line-height: 20px; text-align: center; }
```
